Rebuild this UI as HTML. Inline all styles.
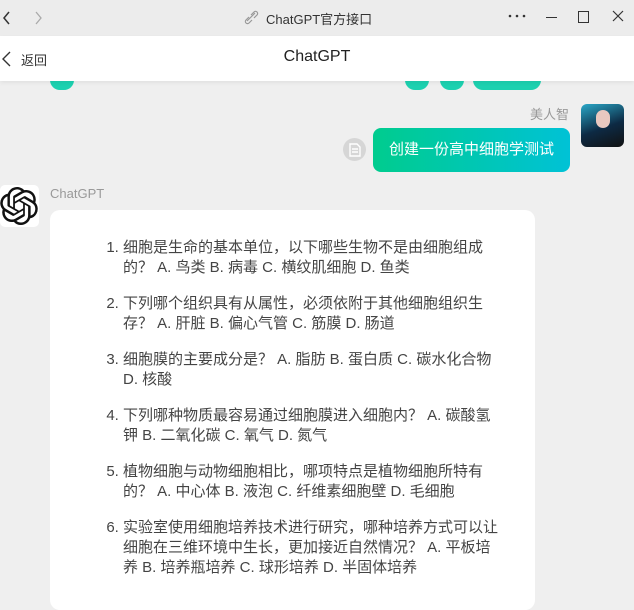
<html><head><style>
body{margin:0;width:634px;height:586px;overflow:hidden;background:#efefef;font-family:"Liberation Sans","Noto Sans CJK SC",sans-serif;position:relative}
.tb{position:absolute;left:0;top:0;width:634px;height:36px;background:#ececec}
.hd{position:absolute;left:0;top:36px;width:634px;height:45px;background:#fff;box-shadow:0 2px 4px rgba(0,0,0,.06)}
.a{position:absolute}
.card{position:absolute;left:50px;top:210px;width:485px;height:400px;background:#fff;border-radius:10px}
ol{position:absolute;left:105px;top:238px;margin:0;padding:0 0 0 18px;width:400px;font-size:15px;line-height:20px;color:#444;white-space:nowrap}
li{margin-bottom:16px}
</style></head><body>
<div class="a" style="left:50px;top:70px;width:24px;height:20px;border-radius:12px;background:#1dd1b0"></div>
<div class="a" style="left:405px;top:70px;width:24px;height:20px;border-radius:12px;background:#1dd1b0"></div>
<div class="a" style="left:440px;top:70px;width:24px;height:20px;border-radius:12px;background:#1dd1b0"></div>
<div class="a" style="left:473px;top:70px;width:68px;height:20px;border-radius:10px;background:#1dd1b0"></div>
<div class="tb">
<svg class="a" style="left:0;top:8px" width="50" height="20"><path d="M9 4L4 10L9 16" stroke="#333" stroke-width="1.5" fill="none"/><path d="M36 4L41 10L36 16" stroke="#aaa" stroke-width="1.3" fill="none"/></svg>
<svg class="a" style="left:243px;top:9px" width="16" height="16"><path d="M4 12L12 4M6 8L3 11a2 2 0 0 0 3 3L9 11M8 6L11 3a2 2 0 0 1 3 3L11 9" stroke="#999" stroke-width="1.2" fill="none"/></svg>
<div class="a" style="left:266px;top:9px;font-size:13px;color:#333">ChatGPT官方接口</div>
<svg class="a" style="left:508px;top:14px" width="20" height="4"><circle cx="2" cy="2" r="1.3" fill="#333"/><circle cx="9" cy="2" r="1.3" fill="#333"/><circle cx="16" cy="2" r="1.3" fill="#333"/></svg>
<div class="a" style="left:546px;top:17px;width:11px;height:1px;background:#333"></div>
<div class="a" style="left:578px;top:11px;width:9px;height:10px;border:1px solid #333"></div>
<svg class="a" style="left:612px;top:10px" width="12" height="12"><path d="M1 1L11 11M11 1L1 11" stroke="#333" stroke-width="1.2"/></svg>
</div>
<div class="hd">
<svg class="a" style="left:0;top:14px" width="14" height="18"><path d="M10 2L3 9L10 16" stroke="#333" stroke-width="1.4" fill="none"/></svg>
<div class="a" style="left:21px;top:14px;font-size:13px;color:#333">返回</div>
<div class="a" style="left:0;width:634px;top:12px;text-align:center;font-size:16px;color:#222">ChatGPT</div>
</div>
<div class="a" style="left:530px;top:104px;font-size:13px;color:#999">美人智</div>
<div class="a" style="left:581px;top:104px;width:43px;height:43px;border-radius:6px;background:linear-gradient(160deg,#2aa8c8,#0d2a44 55%,#111)"></div>
<div class="a" style="left:596px;top:110px;width:14px;height:18px;border-radius:7px;background:#e8c8c0"></div>
<div class="a" style="left:343px;top:138px;width:23px;height:23px;border-radius:12px;background:#d6d6d6"></div>
<svg class="a" style="left:349px;top:143px" width="12" height="14"><path d="M1 1H8L11 4V13H1Z M3 6H9M3 9H9" stroke="#fff" stroke-width="1.4" fill="none"/></svg>
<div class="a" style="left:373px;top:128px;width:197px;height:44px;border-radius:8px;background:linear-gradient(90deg,#00cc8e,#00c2d6);color:#fff;font-size:15px;line-height:44px;text-align:center">创建一份高中细胞学测试</div>
<div class="a" style="left:0;top:185px;width:39px;height:42px;background:#fff;border-radius:5px"></div>
<svg class="a" style="left:0;top:187px" width="38" height="38" viewBox="0 0 24 24"><path fill="#111" d="M22.28 9.82a5.98 5.98 0 0 0-.52-4.910 6.05 6.05 0 0 0-6.51-2.9A6.07 6.07 0 0 0 4.98 4.18a5.98 5.98 0 0 0-4 2.9 6.05 6.05 0 0 0 .74 7.1 5.980 5.98 0 0 0 .51 4.91 6.05 6.05 0 0 0 6.52 2.9A5.98 5.98 0 0 0 13.26 24a6.06 6.06 0 0 0 5.77-4.21 5.99 5.99 0 0 0 4-2.9 6.06 6.06 0 0 0-.75-7.07zm-9.02 12.61a4.48 4.48 0 0 1-2.88-1.04l.14-.08 4.78-2.76a.8.8 0 0 0 .39-.68v-6.74l2.020 1.17a.07.07 0 0 1 .04.05v5.58a4.5 4.5 0 0 1-4.49 4.5zm-9.66-4.130a4.47 4.47 0 0 1-.53-3.01l.14.09 4.78 2.76a.77.77 0 0 0 .78 0l5.84-3.37v2.33a.08.08 0 0 1-.03.06L9.74 19.95a4.5 4.5 0 0 1-6.14-1.65zM2.34 7.9a4.49 4.49 0 0 1 2.37-1.97V11.6a.77.77 0 0 0 .39.68l5.81 3.35-2.02 1.17a.08.08 0 0 1-.07 0l-4.83-2.79A4.5 4.5 0 0 1 2.34 7.87zm16.6 3.86L13.1 8.36 15.12 7.2a.08.08 0 0 1 .07 0l4.83 2.79a4.49 4.49 0 0 1-.68 8.1v-5.68a.79.79 0 0 0-.41-.67zm2.01-3.02l-.14-.09-4.77-2.78a.78.78 0 0 0-.79 0L9.41 9.23V6.9a.07.07 0 0 1 .03-.06l4.83-2.79a4.5 4.5 0 0 1 6.68 4.66zM8.31 12.86l-2.02-1.16a.08.08 0 0 1-.04-.06V6.07a4.5 4.5 0 0 1 7.38-3.45l-.14.08L8.7 5.46a.8.8 0 0 0-.39.68zm1.1-2.37l2.6-1.5 2.6 1.5v3l-2.6 1.5-2.6-1.5z"/></svg>
<div class="a" style="left:50px;top:186px;font-size:13px;color:#999">ChatGPT</div>
<div class="card"></div>
<ol>
<li>细胞是生命的基本单位，以下哪些生物不是由细胞组成<br>的？ A. 鸟类 B. 病毒 C. 横纹肌细胞 D. 鱼类</li>
<li>下列哪个组织具有从属性，必须依附于其他细胞组织生<br>存？ A. 肝脏 B. 偏心气管 C. 筋膜 D. 肠道</li>
<li>细胞膜的主要成分是？ A. 脂肪 B. 蛋白质 C. 碳水化合物<br>D. 核酸</li>
<li>下列哪种物质最容易通过细胞膜进入细胞内？ A. 碳酸氢<br>钾 B. 二氧化碳 C. 氧气 D. 氮气</li>
<li>植物细胞与动物细胞相比，哪项特点是植物细胞所特有<br>的？ A. 中心体 B. 液泡 C. 纤维素细胞壁 D. 毛细胞</li>
<li>实验室使用细胞培养技术进行研究，哪种培养方式可以让<br>细胞在三维环境中生长，更加接近自然情况？ A. 平板培<br>养 B. 培养瓶培养 C. 球形培养 D. 半固体培养</li>
</ol>
</body></html>
